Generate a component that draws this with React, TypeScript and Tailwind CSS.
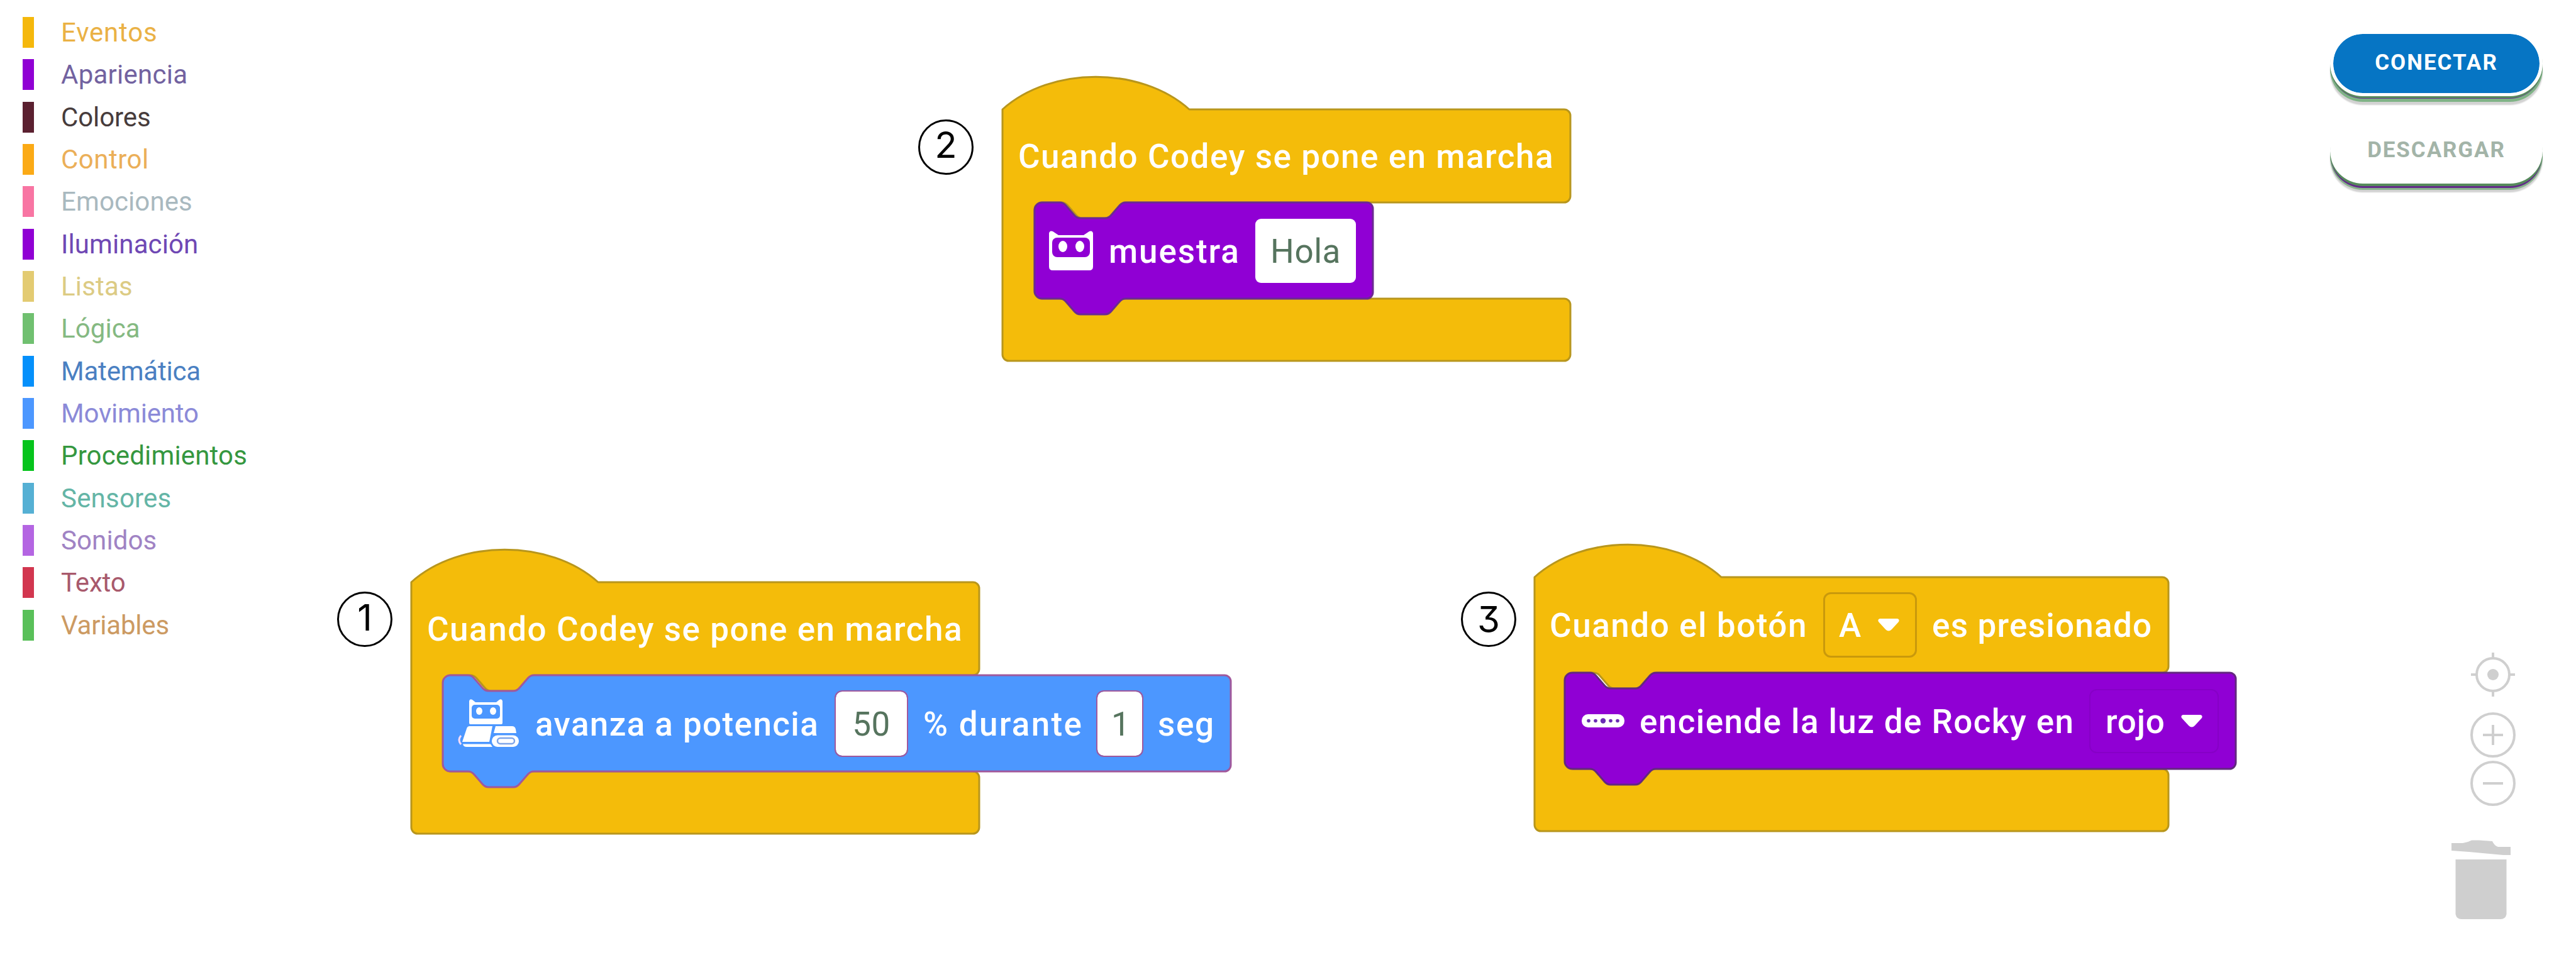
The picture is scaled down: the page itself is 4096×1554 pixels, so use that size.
import React from "react";

const categories = [
  { name: "Eventos", bar: "bg-[#f5b80c]", text: "text-[#eab145] tracking-[0.8px]" },
  { name: "Apariencia", bar: "bg-[#9000d4]", text: "text-[#7262a0] tracking-[0.25px]" },
  { name: "Colores", bar: "bg-[#5b2030]", text: "text-[#473c3c] tracking-[-0.1px]" },
  { name: "Control", bar: "bg-[#fbaa16]", text: "text-[#ebaf58] tracking-[0.5px]" },
  { name: "Emociones", bar: "bg-[#f875a3]", text: "text-[#a9b9bf] tracking-[0.1px]" },
  { name: "Iluminación", bar: "bg-[#9000d4]", text: "text-[#6f48b4] tracking-[0.1px]" },
  { name: "Listas", bar: "bg-[#e3cb72]", text: "text-[#dccb84] tracking-[0.2px]" },
  { name: "Lógica", bar: "bg-[#70c070]", text: "text-[#85b982] tracking-[0.1px]" },
  { name: "Matemática", bar: "bg-[#0590fb]", text: "text-[#4a80c2] tracking-[-0.2px]" },
  { name: "Movimiento", bar: "bg-[#4c97ff]", text: "text-[#8b8ad8] tracking-[-0.2px]" },
  { name: "Procedimientos", bar: "bg-[#06c41c]", text: "text-[#35973f] tracking-[0.15px]" },
  { name: "Sensores", bar: "bg-[#55b0d4]", text: "text-[#64b5a6] tracking-[0.2px]" },
  { name: "Sonidos", bar: "bg-[#b465e2]", text: "text-[#a083c4] tracking-[0.1px]" },
  { name: "Texto", bar: "bg-[#d2364f]", text: "text-[#a8596c] tracking-[-0.2px]" },
  { name: "Variables", bar: "bg-[#59c059]", text: "text-[#cc9a62] tracking-[-0.2px]" },
];

const eventPath = (w: number, hat: number, mouth: number, mouthEnd: number, h: number) =>
  `M0,${hat} c77,-69 220,-69 297,0 H${w - 10} a10,10 0 0 1 10,10 V${mouth - 10} a10,10 0 0 1 -10,10 ` +
  `H196 Q190,${mouth} 186,${mouth + 5} L173,${mouth + 20} Q169,${mouth + 25} 163,${mouth + 25} H127 ` +
  `Q121,${mouth + 25} 117,${mouth + 20} L104,${mouth + 5} Q100,${mouth} 94,${mouth} H63 a12,12 0 0 0 -12,12 ` +
  `V${mouthEnd - 12} a12,12 0 0 0 12,12 H${w - 10} a10,10 0 0 1 10,10 V${h - 10} a10,10 0 0 1 -10,10 H10 a10,10 0 0 1 -10,-10 Z`;

const stackPath = (w: number, h: number) =>
  `M0,12 A12,12 0 0 1 12,0 H40 Q46,0 50,5 L63,20 Q67,25 73,25 H112 Q118,25 122,20 L135,5 Q139,0 145,0 ` +
  `H${w - 10} a10,10 0 0 1 10,10 V${h - 10} a10,10 0 0 1 -10,10 H145 Q139,${h} 135,${h + 5} L122,${h + 20} ` +
  `Q118,${h + 25} 112,${h + 25} H73 Q67,${h + 25} 63,${h + 20} L50,${h + 5} Q46,${h} 40,${h} H12 A12,12 0 0 1 0,${h - 12} Z`;

function Shape({ d, fill, stroke }: { d: string; fill: string; stroke: string }) {
  return (
    <svg className="absolute left-0 top-0 h-px w-px overflow-visible">
      <path d={d} fill={fill} stroke={stroke} strokeWidth="3" strokeLinejoin="round" />
    </svg>
  );
}

function Label({ className, children }: { className: string; children: React.ReactNode }) {
  return <span className={`relative shrink-0 whitespace-nowrap pt-[3px] ${className}`}>{children}</span>;
}

function Caret() {
  return (
    <svg viewBox="0 0 34 20" className="relative h-5 w-[34px] shrink-0">
      <path d="M3,0 H31 Q35,1 33,5 L22,17 Q17,22 12,17 L1,5 Q-1,1 3,0 Z" fill="#fff" />
    </svg>
  );
}

function Step({ n, className }: { n: number; className: string }) {
  return (
    <div
      className={`absolute flex h-[88px] w-[88px] items-center justify-center rounded-full border-[3px] border-black font-['Inter',sans-serif] text-[58px] leading-none text-black ${className}`}
    >
      {n}
    </div>
  );
}

function CodeyIcon() {
  return (
    <svg viewBox="0 0 70 63" className="relative ml-[23px] h-[63px] w-[70px] shrink-0">
      <path d="M0,4 Q1,-1 6,1 L15,7 H55 L64,1 Q69,-1 70,4 V57 Q70,63 64,63 H6 Q0,63 0,57 Z" fill="#fff" />
      <rect x="5" y="11" width="60" height="31" rx="8" fill="#9000d4" />
      <ellipse cx="22" cy="25" rx="7" ry="9" fill="#fff" />
      <ellipse cx="49" cy="25" rx="7" ry="9" fill="#fff" />
    </svg>
  );
}

function RoverIcon() {
  return (
    <svg viewBox="0 0 98 77" className="relative ml-6 h-[77px] w-[98px] shrink-0">
      <path d="M18,3 Q19,-1 23,1 L28,5 H61 L66,1 Q70,-1 71,3 V38 Q71,40 69,40 H20 Q18,40 18,38 Z" fill="#fff" />
      <rect x="22" y="9" width="45" height="22" rx="5" fill="#4c97ff" />
      <ellipse cx="34" cy="19" rx="5" ry="6" fill="#fff" />
      <ellipse cx="56" cy="19" rx="5" ry="6" fill="#fff" />
      <path d="M19,43 H55 L50,68 H7 L14,47 Q15,43 19,43 Z" fill="#fff" />
      <path d="M60,43 H86 Q91,43 92,48 L93,54 H57 Z" fill="#fff" />
      <path d="M5,58 Q-1,65 5,72" fill="none" stroke="#f6dcf8" strokeWidth="3" />
      <path d="M8,71.5 H52 L55,76 H14 Q9,76 8,71.5 Z" fill="#fff" />
      <rect x="54" y="57.500" width="43" height="18.500" rx="9" fill="#fff" />
      <rect x="63" y="62" width="27" height="9" rx="4.500" fill="none" stroke="#7fa5e8" strokeWidth="2.500" />
    </svg>
  );
}

function LightIcon() {
  return (
    <svg viewBox="0 0 68 21" className="relative ml-[27px] h-[21px] w-[68px] shrink-0">
      <rect x="0" y="0" width="68" height="21" rx="10" fill="#fff" />
      <circle cx="11" cy="10.500" r="2.800" fill="#6a2cb4" />
      <circle cx="22" cy="10.500" r="2.800" fill="#6a2cb4" />
      <circle cx="34" cy="10.500" r="4.200" fill="#6a2cb4" />
      <circle cx="46" cy="10.500" r="2.800" fill="#6a2cb4" />
      <circle cx="57" cy="10.500" r="2.800" fill="#6a2cb4" />
    </svg>
  );
}

const yellow = "#f4bc0a";
const yellowEdge = "#b8961c";

export default function App() {
  return (
    <div className="flex h-[1554px] w-[4096px] overflow-hidden bg-white font-['Roboto',sans-serif] text-[53px] leading-none">
      <aside className="flex w-[500px] shrink-0 flex-col gap-[18.330px] pl-9 pt-[27px]">
        {categories.map((c) => (
          <div key={c.name} className="flex h-[49px] shrink-0 items-center gap-[43px]">
            <div className={`h-[49px] w-[18px] ${c.bar}`} />
            <span className={`pt-px text-[42px] ${c.text}`}>{c.name}</span>
          </div>
        ))}
      </aside>

      <main className="relative w-[3200px] shrink-0 text-white">
        <Step n={1} className="left-[36px] top-[941px] pb-[7px]" />
        <Step n={2} className="left-[960px] top-[190px] pb-[9px]" />
        <Step n={3} className="left-[1823px] top-[941px] [font-feature-settings:'cv09']" />

        <section className="absolute left-[1094px] top-[122px] w-[903px]">
          <Shape d={eventPath(903, 52, 200, 353, 452)} fill={yellow} stroke={yellowEdge} />
          <div className="mt-[52px] flex h-[148px] items-center">
            <Label className="ml-[25px] font-medium tracking-[1.520px]">Cuando Codey se pone en marcha</Label>
          </div>
          <div className="relative ml-[51px] flex h-[153px] items-center">
            <Shape d={stackPath(538, 153)} fill="#9000d4" stroke="#6b2a92" />
            <CodeyIcon />
            <Label className="ml-[25px] w-[233px] font-medium tracking-[1.900px]">muestra</Label>
            <div className="relative flex h-[102px] w-[160px] items-center justify-center rounded-[9px] bg-white text-[#56745e]">
              <Label className="tracking-[0.500px]">Hola</Label>
            </div>
          </div>
        </section>

        <section className="absolute left-[154px] top-[874px] w-[903px]">
          <Shape d={eventPath(903, 52, 200, 353, 452)} fill={yellow} stroke={yellowEdge} />
          <div className="mt-[52px] flex h-[148px] items-center">
            <Label className="ml-[25px] font-medium tracking-[1.520px]">Cuando Codey se pone en marcha</Label>
          </div>
          <div className="relative ml-[50px] flex h-[153px] items-center">
            <Shape d={stackPath(1253, 153)} fill="#4c97ff" stroke="#a0589c" />
            <RoverIcon />
            <Label className="ml-[25px] w-[478px] font-medium tracking-[1.400px]">avanza a potencia</Label>
            <div className="relative flex h-[102px] w-[113px] shrink-0 items-center justify-center rounded-[10px] bg-white text-[#56745e] outline-2 outline-[#a0589c]">
              <Label className="tracking-[0.500px]">50</Label>
            </div>
            <Label className="ml-[26px] w-[277px] font-medium tracking-[2.300px]">% durante</Label>
            <div className="relative flex h-[102px] w-[71px] shrink-0 items-center justify-center rounded-[10px] bg-white text-[#56745e] outline-2 outline-[#a0589c]">
              <Label className="pl-[3px]">1</Label>
            </div>
            <Label className="ml-[25px] font-medium tracking-[1.700px]">seg</Label>
          </div>
        </section>

        <section className="absolute left-[1940px] top-[867px] w-[1008px]">
          <Shape d={eventPath(1008, 51, 203, 356, 455)} fill={yellow} stroke={yellowEdge} />
          <div className="mt-[51px] flex h-[152px] items-center">
            <Label className="ml-6 w-[435px] font-medium tracking-[1.550px]">Cuando el botón</Label>
            <div className="relative flex h-[104px] w-[149px] shrink-0 items-center rounded-xl border-[3px] border-[#c9990c]">
              <Label className="ml-[22px] w-[62px] font-medium">A</Label>
              <Caret />
            </div>
            <Label className="ml-6 font-medium tracking-[1.250px]">es presionado</Label>
          </div>
          <div className="relative ml-12 flex h-[153px] items-center">
            <Shape d={stackPath(1067, 153)} fill="#9000d4" stroke="#63287f" />
            <LightIcon />
            <Label className="ml-6 w-[715px] font-medium tracking-[1.400px]">enciende la luz de Rocky en</Label>
            <div className="relative flex h-[102px] w-[206px] shrink-0 items-center rounded-xl border-2 border-[#8600c6]">
              <Label className="ml-6 w-[120px] font-medium tracking-[0.800px]">rojo</Label>
              <Caret />
            </div>
          </div>
        </section>
      </main>

      <div className="flex w-[396px] shrink-0 flex-col pt-[49px]">
        <div className="ml-[5px] flex w-[338px] flex-col gap-[35px] text-[35px] font-bold">
          <button className="h-[104px] rounded-full border-[5px] border-white bg-[#0675c4] bg-clip-padding pb-[3px] text-white tracking-[2px] shadow-[0_3px_0_#568a5c,0_5px_0_-1px_#6a3a90,0_9px_0_#7fb386,0_14px_2px_#d2d2d2]">
            CONECTAR
          </button>
          <button className="h-[104px] rounded-full bg-white pb-1 tracking-[1.900px] text-[#a3b4a8] shadow-[0_4px_0_#568a5c,0_8px_0_-1px_#632a8a,0_10px_0_#88b38c,0_14px_2px_#d2d2d2]">
            DESCARGAR
          </button>
        </div>

        <div className="ml-[226px] mt-[743px] flex w-[76px] flex-col items-center">
          <svg viewBox="0 0 76 76" className="h-[76px] w-[76px]" fill="none" stroke="#cfcfcf" strokeWidth="4">
            <circle cx="38" cy="38" r="26" />
            <circle cx="38" cy="38" r="9" fill="#cfcfcf" stroke="none" />
            <path d="M38,3 V12 M38,64 V73 M3,38 H12 M64,38 H73" />
          </svg>
          <svg viewBox="0 0 76 76" className="mt-5 h-[76px] w-[76px]" fill="none" stroke="#cfcfcf" strokeWidth="4">
            <circle cx="38" cy="38" r="34" />
            <path d="M38,22 V54 M22,38 H54" />
          </svg>
          <svg viewBox="0 0 76 76" className="mt-px h-[76px] w-[76px]" fill="none" stroke="#cfcfcf" strokeWidth="4">
            <circle cx="38" cy="38" r="34" />
            <path d="M22,38 H54" />
          </svg>
        </div>
        <svg viewBox="0 0 94 126" className="ml-[198px] mt-[52px] h-[126px] w-[94px]" fill="#cfcfcf">
          <path d="M0,5 H18 Q26,4 32,0.500 H44 L65,2 Q68,9 74,11 H94 V24 H82 L28,19 L0,17 Z" />
          <path d="M6.500,31 H87.500 V118 Q86,126 78,126 H16 Q8,126 6.500,118 Z" />
        </svg>
      </div>
    </div>
  );
}
